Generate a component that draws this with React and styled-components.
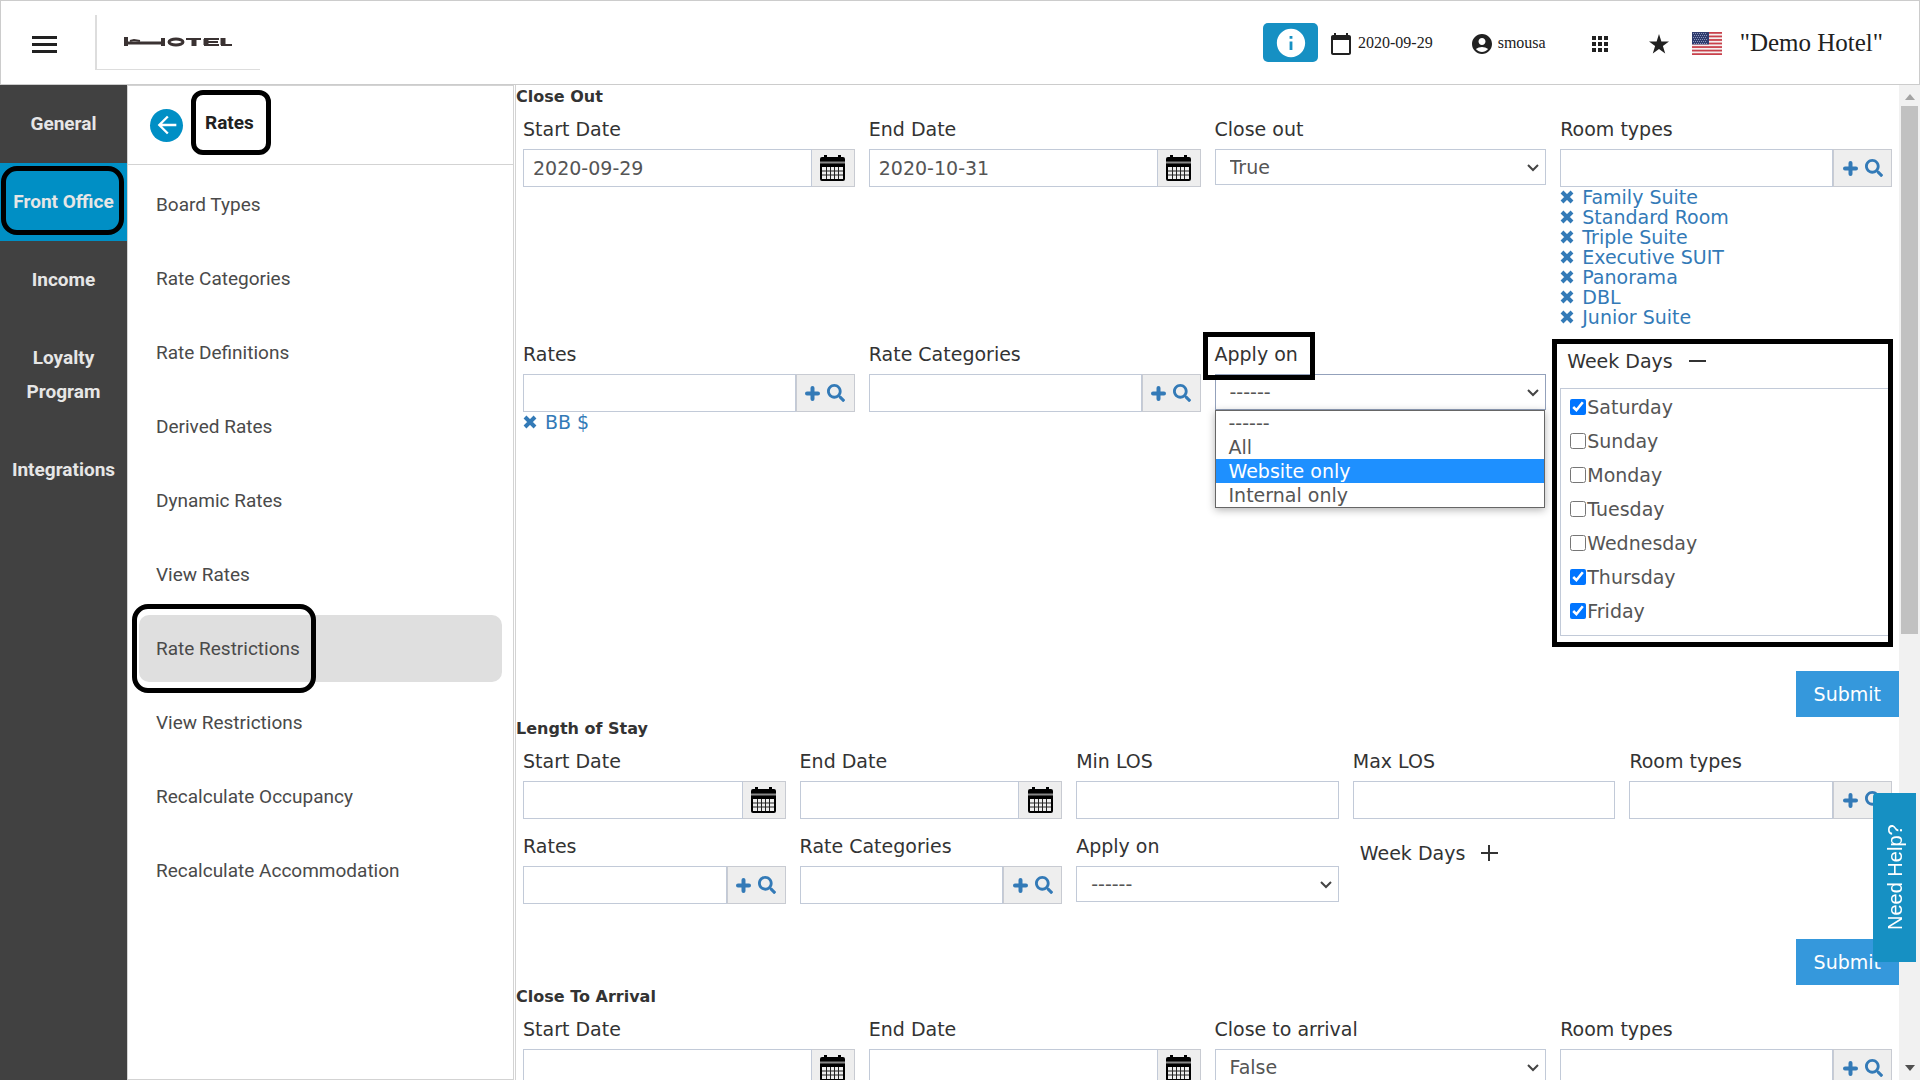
import React, { useState } from 'react';
import styled, { createGlobalStyle, css } from 'styled-components';
import { MdInfo, MdAccountCircle, MdApps, MdArrowBack } from 'react-icons/md';
import { FaSearch } from 'react-icons/fa';

const GlobalStyle = createGlobalStyle`
  * {
    box-sizing: border-box;
  }

  body {
    margin: 0;
    background: #fff;
    overflow: hidden;
    font-family: "DejaVu Sans", Verdana, sans-serif;
    font-size: 19px;
    color: #333;
  }

  button, input, select {
    font: inherit;
    color: inherit;
    margin: 0;
  }

  button {
    border: none;
    background: none;
    padding: 0;
    cursor: pointer;
  }

  a {
    text-decoration: none;
  }

  svg {
    display: block;
    flex: none;
  }
`;

const Page = styled.div`
  height: 100vh;
  display: flex;
  flex-direction: column;
`;

/* top bar */

const TopBar = styled.header`
  height: 85px;
  flex: none;
  display: flex;
  align-items: center;
  justify-content: space-between;
  padding: 0 36px 0 24px;
  border: 1px solid #ccc;
  color: #212121;
  font-family: "Liberation Serif", "Times New Roman", serif;
  font-size: 16px;
`;

const TopGroup = styled.div`
  display: flex;
  align-items: center;
`;

const MenuButton = styled.button`
  width: 38px;
  height: 38px;
  margin-right: 32px;
  padding-top: 3px;
  display: grid;
  place-items: center;
`;

const LogoBox = styled.div`
  width: 165px;
  height: 55px;
  padding-right: 2px;
  border-left: 2px solid #ddd;
  border-bottom: 1px solid #ddd;
  display: grid;
  place-items: center;
`;

const InfoButton = styled.button`
  width: 55px;
  height: 39px;
  border-radius: 5px;
  background: #1690c3;
  color: #fff;
  display: grid;
  place-items: center;
`;

const TopItem = styled.div`
  display: flex;
  align-items: center;
  gap: ${(props) => props.$inner || 0}px;
  margin-left: ${(props) => props.$gap}px;

  svg {
    margin-top: 2px;
  }
`;

const HotelName = styled.div`
  margin-left: 18px;
  font-size: 25px;
`;

/* left navigation */

const Body = styled.div`
  flex: 1;
  min-height: 0;
  display: flex;
`;

const SideNav = styled.nav`
  width: 127px;
  flex: none;
  background: #414141;
  font-family: Roboto, sans-serif;
  font-weight: 700;
  font-size: 19px;
  line-height: 34px;
`;

const SideLink = styled.a`
  position: relative;
  display: block;
  padding: 22px 8px;
  text-align: center;
  color: #e6e6e6;
  background: ${(props) => (props.$active ? '#008fc5' : 'transparent')};
`;

const SubNav = styled.nav`
  width: 387px;
  flex: none;
  border: 1px solid #d3d3d3;
  font-family: Roboto, sans-serif;
  font-size: 19px;
`;

const SubNavHeader = styled.div`
  height: 79px;
  display: flex;
  align-items: center;
  gap: 22px;
  padding-left: 22px;
  border-bottom: 1px solid #d3d3d3;
`;

const BackButton = styled.button`
  width: 33px;
  height: 33px;
  border-radius: 50%;
  background: #008fc5;
  color: #fff;
  display: grid;
  place-items: center;
`;

const SubNavTitle = styled.h2`
  position: relative;
  margin: 0 0 5px;
  font-size: 19px;
  line-height: 23px;
  font-weight: 700;
  color: #212121;
`;

const SubNavList = styled.div`
  display: flex;
  flex-direction: column;
  gap: 7px;
  padding: 6px 11px;
`;

const SubLink = styled.a`
  position: relative;
  height: 67px;
  display: flex;
  align-items: center;
  padding-left: 17px;
  border-radius: 10px;
  color: #4a4a4a;
  background: ${(props) => (props.$active ? '#dfdfdf' : 'transparent')};
`;

const Mark = styled.span`
  position: absolute;
  inset: ${(props) => props.$inset};
  border: 5px solid #000;
  border-radius: ${(props) => props.$radius || 0}px;
  pointer-events: none;
  z-index: 2;
`;

/* form */

const Main = styled.main`
  flex: 1;
  min-width: 0;
  overflow: hidden;
  margin-left: 1px;
  border-left: 1px solid #d3d3d3;
`;

const Section = styled.form`
  display: flex;
  flex-direction: column;
`;

const SectionTitle = styled.h3`
  margin: 0;
  padding-top: 2px;
  font-size: 16px;
  font-weight: 700;
  line-height: 20px;
`;

const Row = styled.div`
  display: grid;
  grid-template-columns: repeat(${(props) => props.$cols}, minmax(0, 1fr));
`;

const FieldBox = styled.div`
  position: relative;
  padding: 12px 7px 5px;
`;

const Label = styled.label`
  position: relative;
  display: block;
  width: fit-content;
  line-height: 21px;
  margin-bottom: 9px;
`;

const control = css`
  border: 1px solid #c2cad8;
  border-radius: 0;
  background: #fff;
  color: #555;
  outline: none;
`;

const InputGroup = styled.div`
  display: flex;
  height: 38px;
`;

const TextInput = styled.input`
  ${control}
  flex: 1;
  min-width: 0;
  height: 38px;
  width: 100%;
  padding: 0 9px;
`;

const Addon = styled.div`
  width: ${(props) => props.$width}px;
  display: flex;
  align-items: center;
  justify-content: center;
  gap: 7px;
  background: #eee;
  border: 1px solid #c8cbd2;
  border-left-width: ${(props) => (props.$width > 50 ? 1 : 0)}px;
  color: #337ab7;
`;

const SelectWrap = styled.div`
  position: relative;
`;

const Select = styled.select`
  ${control}
  appearance: none;
  display: block;
  width: 100%;
  height: 36px;
  padding: 0 14px;
  border-color: ${(props) => (props.$open ? '#93a1bb' : '#c2cad8')};
`;

const Chevron = styled.svg`
  position: absolute;
  right: 6px;
  top: 15px;
  pointer-events: none;
`;

const Options = styled.ul`
  position: absolute;
  top: 100%;
  left: 0;
  right: 1px;
  z-index: 1;
  margin: 0;
  padding: 0;
  list-style: none;
  border: 1px solid #666;
  background: #fff;
  box-shadow: 0 2px 8px rgba(0, 0, 0, 0.3);
`;

const Option = styled.li`
  padding-left: 13px;
  line-height: 24px;
  color: ${(props) => (props.$active ? '#fff' : '#555')};
  background: ${(props) => (props.$active ? '#1e90ff' : 'transparent')};
`;

const ChosenList = styled.div`
  display: flex;
  flex-direction: column;
  align-items: flex-start;
`;

const Chosen = styled.a`
  display: flex;
  align-items: center;
  gap: 8px;
  color: #337ab7;
  line-height: 20px;
`;

const DaysToggle = styled.button`
  display: flex;
  align-items: center;
  gap: 16px;
  padding: 0 7px;
  height: 34px;
`;

const DaysBox = styled.div`
  margin-top: 10px;
  padding: 1px 9px 7px;
  border: 1px solid #c2cad8;
`;

const Day = styled.label`
  display: flex;
  align-items: center;
  gap: 1px;
  line-height: 34px;
  color: #555;

  input {
    width: 16px;
    height: 16px;
    accent-color: #0075ff;
  }
`;

const Submit = styled.button`
  align-self: flex-end;
  height: 46px;
  margin-top: 30px;
  padding: 0 18px;
  background: #3598dc;
  color: #fff;
`;

const Scrollbar = styled.div`
  width: 21px;
  flex: none;
  display: flex;
  flex-direction: column;
  align-items: center;
  padding: 9px 0;
  background: #f1f1f1;
`;

const Thumb = styled.div`
  width: 17px;
  height: 54%;
  margin: 6px 0 auto;
  background: #c1c1c1;
`;

const HelpTab = styled.button`
  position: fixed;
  right: 4px;
  bottom: 118px;
  z-index: 3;
  width: 43px;
  height: 169px;
  padding-right: 3px;
  border-radius: 0 4px 4px 0;
  background: #1690c3;
  color: #fff;
  font-family: "Liberation Sans", Arial, sans-serif;
  font-size: 20px;
  writing-mode: vertical-rl;
  transform: rotate(180deg);
`;

const sideItems = ['General', 'Front Office', 'Income', 'Loyalty Program', 'Integrations'];

const subItems = [
  'Board Types',
  'Rate Categories',
  'Rate Definitions',
  'Derived Rates',
  'Dynamic Rates',
  'View Rates',
  'Rate Restrictions',
  'View Restrictions',
  'Recalculate Occupancy',
  'Recalculate Accommodation',
];

const roomTypes = ['Family Suite', 'Standard Room', 'Triple Suite', 'Executive SUIT', 'Panorama', 'DBL', 'Junior Suite'];
const applyOptions = ['------', 'All', 'Website only', 'Internal only'];
const weekDays = ['Saturday', 'Sunday', 'Monday', 'Tuesday', 'Wednesday', 'Thursday', 'Friday'];

const HotelLogo = () => (
  <svg width="108" height="10" viewBox="0 0 108 10" fill="none" stroke="#3a3232" role="img" aria-label="Hotel">
    <path d="M2 0v9" strokeWidth="4" />
    <path d="M3 6h37" strokeWidth="3" />
    <path d="M6 4l4-1 6 1" strokeWidth="2" />
    <path d="M39 1v8" strokeWidth="4" />
    <ellipse cx="52" cy="5" rx="7" ry="3" strokeWidth="3" />
    <path d="M62 2h15M80 2h15M82 5h12M80 8h15M97 8h11" strokeWidth="2" />
    <path d="M70 2v7M82 2v6M99 1v7" strokeWidth="5" />
  </svg>
);

const MenuIcon = () => (
  <svg width="25" height="17" viewBox="0 0 25 17" fill="#212121">
    <path d="M0 0h25v3H0zM0 7h25v3H0zM0 14h25v3H0z" />
  </svg>
);

const DateIcon = () => (
  <svg width="20" height="22" viewBox="0 0 20 22" fill="#212121">
    <path d="M18 2h-1V0h-2v2H5V0H3v2H2C.9 2 0 2.900 0 4v16c0 1.100.9 2 2 2h16c1.100 0 2-.9 2-2V4c0-1.100-.9-2-2-2zm0 18H2V7h16v13z" />
  </svg>
);

const StarIcon = () => (
  <svg width="20" height="20" viewBox="0 0 20 20" fill="#212121">
    <path d="M10 0l2.400 7.400H20l-6.100 4.600 2.300 7.600L10 15l-6.200 4.600L6.100 12 0 7.400h7.600z" />
  </svg>
);

const Flag = () => (
  <svg width="30" height="23" viewBox="0 0 30 23">
    <rect width="30" height="23" fill="#f5f0f0" />
    {[0, 1, 2, 3, 4, 5, 6].map((i) => (
      <rect key={i} y={i * 3.54} width="30" height="1.77" fill="#c8414b" />
    ))}
    <rect width="17" height="12.400" fill="#2f3c6e" />
    {[1, 3, 5, 7, 9, 11].map((y) => (
      <path key={y} d={`M${y % 4 === 1 ? 1 : 2} ${y + 0.5}h14`} stroke="#8c96bb" strokeWidth="1" strokeDasharray="1 1" />
    ))}
  </svg>
);

const CalendarIcon = () => (
  <svg width="25" height="26" viewBox="0 0 25 26">
    <path d="M4 0h3v2h11V0h3v2h2a2 2 0 0 1 2 2v20a2 2 0 0 1-2 2H2a2 2 0 0 1-2-2V4a2 2 0 0 1 2-2h2z" fill="#000" />
    <path d="M0 7.500h25" stroke="#888" strokeWidth="2" />
    <path d="M2 12h21v12H2z" fill="#eee" />
    <path d="M2 16h21M2 20h21M6.500 12v12M10.500 12v12M14.500 12v12M18.500 12v12" stroke="#222" strokeWidth="1" />
  </svg>
);

const PlusIcon = () => (
  <svg width="15" height="15" viewBox="0 0 15 15" stroke="#337ab7" strokeWidth="4" strokeLinecap="round">
    <path d="M7.500 2v11M2 7.500h11" />
  </svg>
);

const CrossIcon = () => (
  <svg width="14" height="14" viewBox="0 0 14 14" stroke="#337ab7" strokeWidth="4">
    <path d="M2 2l10 10M12 2L2 12" />
  </svg>
);

function Field({ id, label, type, value = '', chosen = [], options, open, marked }) {
  return (
    <FieldBox>
      <Label htmlFor={id}>
        {label}
        {marked && <Mark $inset="-12px -17px -15px -12px" />}
      </Label>
      {type === 'text' && <InputGroup><TextInput id={id} defaultValue={value} /></InputGroup>}
      {type === 'date' && (
        <InputGroup>
          <TextInput id={id} defaultValue={value} />
          <Addon as="button" type="button" $width={43} aria-label="Pick a date"><CalendarIcon /></Addon>
        </InputGroup>
      )}
      {type === 'lookup' && (
        <InputGroup>
          <TextInput id={id} defaultValue={value} />
          <Addon $width={59}>
            <button type="button" aria-label="Add"><PlusIcon /></button>
            <button type="button" aria-label="Search"><FaSearch size={18} /></button>
          </Addon>
        </InputGroup>
      )}
      {type === 'select' && (
        <SelectWrap>
          <Select id={id} defaultValue={value} $open={open}>
            {options.map((option) => <option key={option}>{option}</option>)}
          </Select>
          <Chevron width="13" height="9" viewBox="0 0 13 9" fill="none" stroke="#444" strokeWidth="2">
            <path d="M1 1l5 5 5-5" />
          </Chevron>
          {open && (
            <Options>
              {options.map((option) => (
                <Option key={option} $active={option === 'Website only'}>{option}</Option>
              ))}
            </Options>
          )}
        </SelectWrap>
      )}
      {chosen.length > 0 && (
        <ChosenList>
          {chosen.map((name) => (
            <Chosen key={name} href="#"><CrossIcon />{name}</Chosen>
          ))}
        </ChosenList>
      )}
    </FieldBox>
  );
}

function WeekDays({ startOpen, marked }) {
  const [open, setOpen] = useState(startOpen);

  return (
    <FieldBox>
      {marked && <Mark $inset="7px 6px -6px -1px" />}
      <DaysToggle type="button" onClick={() => setOpen(!open)}>
        Week Days
        <svg width="17" height="18" viewBox="0 0 17 18" stroke="#333" strokeWidth="2">
          <path d={open ? 'M0 9h17' : 'M0 9h17M8 1v16'} />
        </svg>
      </DaysToggle>
      {open && (
        <DaysBox>
          {weekDays.map((day) => (
            <Day key={day}>
              <input type="checkbox" defaultChecked={['Saturday', 'Thursday', 'Friday'].includes(day)} />
              {day}
            </Day>
          ))}
        </DaysBox>
      )}
    </FieldBox>
  );
}

function App() {
  return (
    <Page>
      <GlobalStyle />
      <TopBar>
        <TopGroup>
          <MenuButton aria-label="Menu"><MenuIcon /></MenuButton>
          <LogoBox><HotelLogo /></LogoBox>
        </TopGroup>
        <TopGroup>
          <InfoButton aria-label="Info"><MdInfo size={34} /></InfoButton>
          <TopItem $gap={13} $inner={7}><DateIcon />2020-09-29</TopItem>
          <TopItem $gap={37} $inner={4}><MdAccountCircle size={24} />smousa</TopItem>
          <TopItem $gap={42}><MdApps size={24} /></TopItem>
          <TopItem $gap={37}><StarIcon /></TopItem>
          <TopItem $gap={23}><Flag /></TopItem>
          <HotelName>"Demo Hotel"</HotelName>
        </TopGroup>
      </TopBar>
      <Body>
        <SideNav>
          {sideItems.map((item) => (
            <SideLink key={item} href="#" $active={item === 'Front Office'}>
              {item}
              {item === 'Front Office' && <Mark $inset="3px 3px 6px 1px" $radius={16} />}
            </SideLink>
          ))}
        </SideNav>
        <SubNav>
          <SubNavHeader>
            <BackButton aria-label="Back"><MdArrowBack size={28} /></BackButton>
            <SubNavTitle>
              Rates
              <Mark $inset="-21px -17px -21px -14px" $radius={12} />
            </SubNavTitle>
          </SubNavHeader>
          <SubNavList>
            {subItems.map((item) => (
              <SubLink key={item} href="#" $active={item === 'Rate Restrictions'}>
                {item}
                {item === 'Rate Restrictions' && <Mark $inset="-11px 186px -11px -7px" $radius={16} />}
              </SubLink>
            ))}
          </SubNavList>
        </SubNav>
        <Main>
          <Section>
            <SectionTitle>Close Out</SectionTitle>
            <Row $cols={4}>
              <Field id="co-start" label="Start Date" type="date" value="2020-09-29" />
              <Field id="co-end" label="End Date" type="date" value="2020-10-31" />
              <Field id="co-close" label="Close out" type="select" value="True" options={['True', 'False']} />
              <Field id="co-rooms" label="Room types" type="lookup" chosen={roomTypes} />
            </Row>
            <Row $cols={4}>
              <Field id="co-rates" label="Rates" type="lookup" chosen={['BB $']} />
              <Field id="co-categories" label="Rate Categories" type="lookup" />
              <Field id="co-apply" label="Apply on" type="select" options={applyOptions} value="------" open marked />
              <WeekDays startOpen marked />
            </Row>
            <Submit type="button">Submit</Submit>
          </Section>
          <Section>
            <SectionTitle>Length of Stay</SectionTitle>
            <Row $cols={5}>
              <Field id="los-start" label="Start Date" type="date" />
              <Field id="los-end" label="End Date" type="date" />
              <Field id="los-min" label="Min LOS" type="text" />
              <Field id="los-max" label="Max LOS" type="text" />
              <Field id="los-rooms" label="Room types" type="lookup" />
            </Row>
            <Row $cols={5}>
              <Field id="los-rates" label="Rates" type="lookup" />
              <Field id="los-categories" label="Rate Categories" type="lookup" />
              <Field id="los-apply" label="Apply on" type="select" options={applyOptions} value="------" />
              <WeekDays />
            </Row>
            <Submit type="button">Submit</Submit>
          </Section>
          <Section>
            <SectionTitle>Close To Arrival</SectionTitle>
            <Row $cols={4}>
              <Field id="cta-start" label="Start Date" type="date" />
              <Field id="cta-end" label="End Date" type="date" />
              <Field id="cta-close" label="Close to arrival" type="select" value="False" options={['True', 'False']} />
              <Field id="cta-rooms" label="Room types" type="lookup" />
            </Row>
          </Section>
        </Main>
        <Scrollbar>
          <svg width="10" height="6" viewBox="0 0 10 6"><path d="M0 6l5-6 5 6z" fill="#a3a3a3" /></svg>
          <Thumb />
          <svg width="10" height="6" viewBox="0 0 10 6"><path d="M0 0l5 6 5-6z" fill="#505050" /></svg>
        </Scrollbar>
      </Body>
      <HelpTab>Need Help?</HelpTab>
    </Page>
  );
}

export default App;
